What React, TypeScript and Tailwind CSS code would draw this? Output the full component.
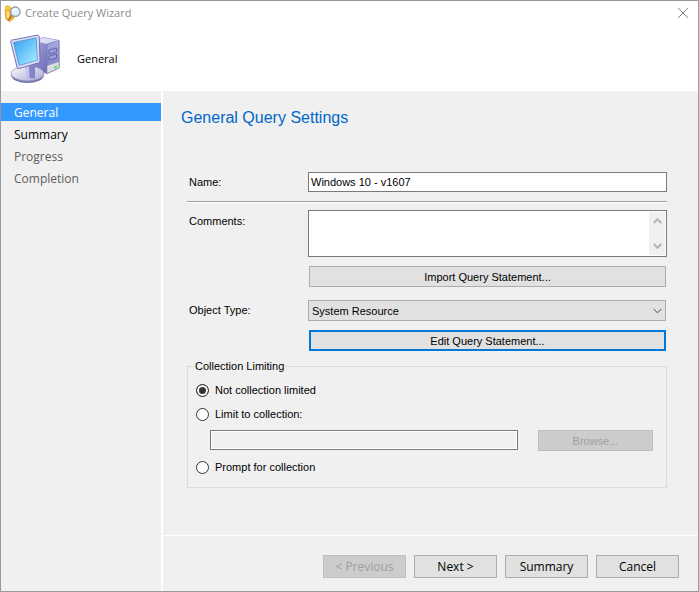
import type { ReactNode } from "react";

const uiFont = "font-['Open_Sans','Noto_Sans',sans-serif]";
const formFont = "font-['Liberation_Sans',Arial,sans-serif]";

function WizardIcon() {
  return (
    <svg width="17" height="17" viewBox="0 0 17 17" aria-hidden="true">
      <path d="M1 4.500 5 3l5 1.500V13l-4 3.500L2 14Z" fill="#f5b535" stroke="#dc9a22" strokeWidth=".8" />
      <path d="M2.500 5.500 5 7v8L3 13Z" fill="#ffe38b" />
      <path d="m3.500 0 .8 1.700L6 .8l-.4 1.700L8 3l-2 1.200.6 1.600-2-.7-1.300 1.600-.5-1.900L.5 4.700 2 3.300.8 1.200l1.900.6Z" fill="#f9c93b" stroke="#e3a526" strokeWidth=".4" />
      <path d="m8 10-3.500 5" stroke="#b97823" strokeWidth="2" strokeLinecap="round" />
      <circle cx="11.300" cy="6.700" r="4.700" fill="#dff0fc" stroke="#8f9dac" strokeWidth="1.400" />
      <path d="M8.700 6.500a3 3 0 0 1 3.500-2.500" fill="none" stroke="#fff" strokeWidth="1.400" />
    </svg>
  );
}

function ComputerIcon() {
  return (
    <svg width="52" height="50" viewBox="0 0 52 50" aria-hidden="true">
      <defs>
        <linearGradient id="screen" x1="0" y1="0" x2="1" y2="1">
          <stop offset="0" stopColor="#3d9df0" />
          <stop offset=".5" stopColor="#6cc8fb" />
          <stop offset="1" stopColor="#b4f2ff" />
        </linearGradient>
        <linearGradient id="side" x1="0" y1="0" x2="1" y2="1">
          <stop offset="0" stopColor="#a5a5df" />
          <stop offset="1" stopColor="#5959a6" />
        </linearGradient>
        <linearGradient id="front" x1="0" y1="0" x2="0" y2="1">
          <stop offset="0" stopColor="#a9abe0" />
          <stop offset="1" stopColor="#7679bf" />
        </linearGradient>
        <linearGradient id="base" x1="0" y1="0" x2="1" y2="1">
          <stop offset="0" stopColor="#ffffff" />
          <stop offset="1" stopColor="#a4a4d3" />
        </linearGradient>
      </defs>
      <path d="m24 7 9-3.500 16 3V34l-12 5.500-13-5.500Z" fill="url(#side)" stroke="#7878b8" strokeWidth=".8" />
      <path d="m24 7 9-3.500 16 3L37 10Z" fill="#dcdcf6" />
      <path d="m37 10 12-3.500V34l-12 5.500Z" fill="url(#front)" stroke="#6a6aae" strokeWidth=".6" />
      <path d="m39 16 7.500-2v4L39 20Zm0 6 7.500-2v4L39 26Z" fill="#9a9dd8" stroke="#5b5da5" strokeWidth=".8" />
      <path d="m37 31.500 12-4V34l-12 5.500Z" fill="#d9dbe9" stroke="#8789a8" strokeWidth=".6" />
      <path d="m44 32.500 3-1v2.300l-3 1Z" fill="#5ee653" />
      <ellipse cx="17.500" cy="41" rx="16.500" ry="8" fill="#7474ad" />
      <ellipse cx="17.500" cy="39.500" rx="16.500" ry="7.500" fill="url(#base)" stroke="#8b8bbc" strokeWidth=".7" />
      <path d="m15 32 10-2v14.500l-7-.5Z" fill="#8484ca" />
      <path d="m15 32 4-.8.500 12.900H18Z" fill="#c6c6ef" />
      <path d="m1.500 6.200 25.500-5q2-.3 2.200 1.200l.8 24.500q0 1.500-1.500 2L9 34.500q-1.600.4-2-1.500L.8 8q-.3-1.500.7-1.800Z" fill="#dedff5" stroke="#6f73b2" strokeWidth="1" />
      <path d="m3.500 8.500 22.700-4.700 1.300 22.400L9 31.500Z" fill="url(#screen)" stroke="#4a83cf" strokeWidth=".7" />
    </svg>
  );
}

function Chevron({ up = false, className = "" }: { up?: boolean; className?: string }) {
  return (
    <svg width="9" height="6" viewBox="0 0 9 6" fill="none" stroke="currentColor" className={className} aria-hidden="true">
      <path d={up ? "M.7 5 4.500 1.200 8.300 5" : "M.7 1 4.500 4.800 8.300 1"} />
    </svg>
  );
}

function FooterButton({ children, disabled = false }: { children: ReactNode; disabled?: boolean }) {
  return (
    <button
      type="button"
      disabled={disabled}
      className="h-[23px] w-[83px] border border-[#adadad] bg-[#e1e1e1] text-center leading-[20px] text-black disabled:border-[#bfbfbf] disabled:bg-[#cccccc] disabled:text-[#a0a0a0]"
    >
      {children}
    </button>
  );
}

function RadioRow({ label, defaultChecked = false }: { label: string; defaultChecked?: boolean }) {
  return (
    <label className="flex h-4 items-center gap-[6px]">
      <input
        type="radio"
        name="limiting"
        defaultChecked={defaultChecked}
        className="size-[13px] appearance-none rounded-full border border-[#333333] bg-white checked:bg-[#333333] checked:shadow-[inset_0_0_0_2px_white]"
      />
      {label}
    </label>
  );
}

const steps = [
  { name: "General", style: "bg-[#3399ff] text-white" },
  { name: "Summary", style: "text-black" },
  { name: "Progress", style: "text-[#5c5c5c]" },
  { name: "Completion", style: "text-[#5c5c5c]" },
];

export default function App() {
  return (
    <div className={`flex min-h-screen flex-col border border-[#98989d] bg-white text-[12px] text-black ${uiFont}`}>
      <header className="h-[90px]">
        <div className="flex h-6 items-center gap-1 pr-[9px] pl-[3px]">
          <WizardIcon />
          <h1 className="flex-1 text-[11px] text-[#8c8c8c]">Create Query Wizard</h1>
          <button type="button" aria-label="Close" className="text-[#858585]">
            <svg width="12" height="12" viewBox="0 0 12 12" stroke="currentColor">
              <path d="m1 1 10 10M11 1 1 11" />
            </svg>
          </button>
        </div>
        <div className="flex items-center gap-[15px] pt-[9px] pl-[9px]">
          <ComputerIcon />
          <h2 className="text-[11px]">General</h2>
        </div>
      </header>

      <div className="flex flex-1 gap-[2px]">
        <nav className="w-[160px] bg-[#f0f0f0] pt-3">
          <ol className="flex flex-col gap-1">
            {steps.map((step) => (
              <li key={step.name} className={`h-[18px] pl-[13px] leading-[20px] ${step.style}`}>
                {step.name}
              </li>
            ))}
          </ol>
        </nav>

        <div className="flex flex-1 flex-col gap-px">
          <main className={`flex-1 bg-[#f0f0f0] pr-[31px] pl-6 text-[11px] leading-[15px] ${formFont}`}>
            <h2 className="-ml-[6px] pt-[15px] text-[16px] leading-[24px] text-[#0066cc]">General Query Settings</h2>

            <div className="mt-[42px] flex items-center">
              <label htmlFor="name" className="w-[121px] pl-[2px]">Name:</label>
              <input id="name" defaultValue="Windows 10 - v1607" className="h-5 min-w-0 flex-1 border border-[#7a7a7a] bg-white px-[2px]" />
            </div>

            <hr className="mt-[9px] h-[2px] border-t border-b border-t-[#a0a0a0] border-b-white" />

            <div className="mt-[7px] flex">
              <label htmlFor="comments" className="w-[121px] pt-1 pl-[2px]">Comments:</label>
              <div className="flex h-[47px] flex-1 border border-[#7a7a7a] bg-white p-px">
                <textarea id="comments" className="min-w-0 flex-1 resize-none" />
                <div className="flex w-4 flex-col items-center justify-between bg-[#f0f0f0] py-[6px] text-[#b4b4b4]">
                  <Chevron up className="stroke-2" />
                  <Chevron className="stroke-2" />
                </div>
              </div>
            </div>

            <div className="mt-[9px] pr-px pl-[122px]">
              <button type="button" className="block h-[21px] w-full border border-[#adadad] bg-[#e1e1e1] pt-px">
                Import Query Statement...
              </button>
            </div>

            <div className="mt-[13px] flex items-center pr-px">
              <label htmlFor="type" className="w-[121px] pl-[2px]">Object Type:</label>
              <div className="grid flex-1 items-center">
                <select id="type" className="col-start-1 row-start-1 h-[21px] w-full appearance-none border border-[#adadad] bg-[#e1e1e1] px-[3px] pt-px">
                  <option>System Resource</option>
                </select>
                <Chevron className="pointer-events-none col-start-1 row-start-1 mr-1 justify-self-end text-[#404040]" />
              </div>
            </div>

            <div className="mt-[9px] pr-px pl-[122px]">
              <button type="button" className="block h-[21px] w-full border-2 border-[#0078d7] bg-[#e1e1e1] pt-px">
                Edit Query Statement...
              </button>
            </div>

            <fieldset className="mt-2 border border-[#dcdcdc] px-[6px] pb-3">
              <legend className="px-px">Collection Limiting</legend>
              <div className="flex flex-col gap-2 px-[2px] pt-2">
                <RadioRow label="Not collection limited" defaultChecked />
                <RadioRow label="Limit to collection:" />
                <div className="flex gap-5 pr-[5px] pl-[14px]">
                  <input aria-label="Collection" disabled className="h-5 min-w-0 flex-1 border border-[#7a7a7a] bg-[#f0f0f0] shadow-[inset_0_0_0_1px_white]" />
                  <button type="button" disabled className="h-[21px] w-[115px] border border-[#bfbfbf] bg-[#cccccc] pt-px text-[#a0a0a0]">
                    Browse...
                  </button>
                </div>
                <RadioRow label="Prompt for collection" />
              </div>
            </fieldset>
          </main>

          <footer className="flex h-[55px] justify-end gap-2 bg-[#f0f0f0] pt-[19px] pr-[19px]">
            <FooterButton disabled>&lt; Previous</FooterButton>
            <FooterButton>Next &gt;</FooterButton>
            <FooterButton>Summary</FooterButton>
            <FooterButton>Cancel</FooterButton>
          </footer>
        </div>
      </div>
    </div>
  );
}
